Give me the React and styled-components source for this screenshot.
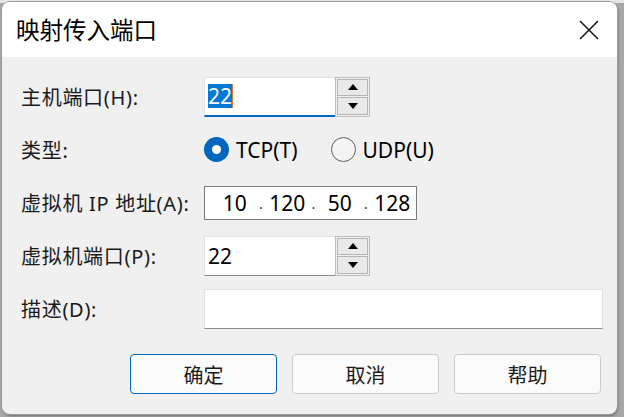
import React from 'react';
import styled, { createGlobalStyle } from 'styled-components';

const GlobalStyle = createGlobalStyle`
  html, body {
    margin: 0;
    padding: 0;
    background: #b4b4b4;
  }
  body {
    font-family: "Noto Sans", "Noto Sans CJK SC", sans-serif;
    color: #000;
  }
`;

const Desktop = styled.div`
  width: 624px;
  height: 417px;
  padding: 2px 0 0 2px;
  box-sizing: border-box;
  background: linear-gradient(#e6e6e6 0, #e6e6e6 3px, #a8a8a8 3px);
  overflow: hidden;
`;

const Window = styled.div`
  width: 615px;
  height: 412px;
  display: flex;
  flex-direction: column;
  background: #f0f0f0;
  border-radius: 8px;
  box-shadow: 0 0 0 1px #9a9a9a, 1px 2px 3px rgba(0, 0, 0, 0.35);
  overflow: hidden;
`;

const TitleBar = styled.div`
  height: 55px;
  display: flex;
  align-items: center;
  justify-content: space-between;
  padding: 0 18px 0 14px;
  background: #fff;
`;

const Title = styled.h1`
  margin: 0;
  font-size: 23.5px;
  font-weight: 400;
  font-family: "Noto Sans CJK SC", sans-serif;
  line-height: 1;
`;

const CloseButton = styled.button`
  width: 20px;
  height: 20px;
  padding: 0;
  border: 0;
  background: none;
  display: flex;
`;

const Body = styled.div`
  flex: 1;
  display: flex;
  flex-direction: column;
  padding: 13px 16px 20px 19px;
`;

const Form = styled.div`
  display: grid;
  grid-template-columns: 183px 1fr;
  grid-auto-rows: 53px;
  align-items: center;
`;

const Label = styled.label`
  font-size: 20px;
  letter-spacing: 0.7px;
  color: #1a1a1a;
  white-space: nowrap;
`;

const Field = styled.div`
  display: flex;
  align-items: center;
`;

const SpinBox = styled.div`
  display: flex;
  width: 166px;
  height: 40px;
`;

const SpinInput = styled.div`
  flex: 1;
  display: flex;
  align-items: center;
  padding-left: 3px;
  background: #fff;
  border: 1px solid #e2e2e2;
  border-right: 0;
  border-bottom: ${p => (p.$focused ? '2px solid #0067c0' : '1px solid #8a8a8a')};
  font-size: 21px;
`;

const Selected = styled.span`
  background: #0078d7;
  color: #fff;
  line-height: 24px;
  border-right: 1.5px solid #e87a1a;
`;

const SpinButtons = styled.div`
  width: 35px;
  display: flex;
  flex-direction: column;
  gap: 1px;
  padding: 1px;
  box-sizing: border-box;
  border: 1px solid #bcbcbc;
  background: #f0f0f0;
`;

const SpinButton = styled.div`
  flex: 1;
  display: flex;
  align-items: center;
  justify-content: center;
  border: 1px solid #b4b4b4;
  background: #e9e9e9;
`;

const Arrow = styled.span`
  width: 0;
  height: 0;
  border-left: 5px solid transparent;
  border-right: 5px solid transparent;
  ${p => (p.$down ? 'border-top: 6px solid #000;' : 'border-bottom: 6px solid #000;')}
`;

const RadioGroup = styled.div`
  display: flex;
  align-items: center;
  gap: 33px;
`;

const Radio = styled.div`
  display: flex;
  align-items: center;
  gap: 7px;
  font-size: 21px;
`;

const RadioMark = styled.span`
  width: 25px;
  height: 25px;
  border-radius: 50%;
  box-sizing: border-box;
  display: flex;
  align-items: center;
  justify-content: center;
  ${p =>
    p.$checked
      ? 'background: #0067c0;'
      : 'background: #f4f4f4; border: 1.5px solid #5c5c5c;'}

  &::after {
    content: '';
    width: 9px;
    height: 9px;
    border-radius: 50%;
    background: #fff;
    display: ${p => (p.$checked ? 'block' : 'none')};
  }
`;

const IpBox = styled.div`
  width: 213px;
  height: 34px;
  box-sizing: border-box;
  display: flex;
  align-items: center;
  padding-left: 8px;
  background: #fff;
  border: 1px solid #7a7a7a;
  font-size: 21px;
`;

const Octet = styled.span`
  width: 43.5px;
  text-align: center;
`;

const Dot = styled.span`
  width: 9px;
  text-align: center;
  font-size: 14px;
  align-self: flex-end;
  padding-bottom: 6px;
  color: #333;
`;

const TextInput = styled.div`
  width: 399px;
  height: 40px;
  box-sizing: border-box;
  background: #fff;
  border: 1px solid #e2e2e2;
  border-bottom: 1px solid #8a8a8a;
`;

const Actions = styled.div`
  margin-top: auto;
  display: flex;
  justify-content: flex-end;
  gap: 15px;
`;

const Button = styled.button`
  width: 147px;
  height: 40px;
  border-radius: 4px;
  background: #fbfbfb;
  border: 1px solid ${p => (p.$primary ? '#0067c0' : '#cccccc')};
  font-family: "Noto Sans CJK SC", sans-serif;
  font-size: 20px;
  color: #1a1a1a;
  padding: 0;
`;

const Spin = ({ value, focused }) => (
  <SpinBox>
    <SpinInput $focused={focused}>
      {focused ? <Selected>{value}</Selected> : value}
    </SpinInput>
    <SpinButtons>
      <SpinButton><Arrow /></SpinButton>
      <SpinButton><Arrow $down /></SpinButton>
    </SpinButtons>
  </SpinBox>
);

const ip = ['10', '120', '50', '128'];

export default function App() {
  return (
    <>
      <GlobalStyle />
      <Desktop>
        <Window>
          <TitleBar>
            <Title>映射传入端口</Title>
            <CloseButton>
              <svg width="20" height="20" viewBox="0 0 20 20">
                <path d="M1 1 L19 19 M19 1 L1 19" stroke="#1a1a1a" strokeWidth="1.6" fill="none" />
              </svg>
            </CloseButton>
          </TitleBar>
          <Body>
            <Form>
              <Label>主机端口(H):</Label>
              <Field><Spin value="22" focused /></Field>

              <Label>类型:</Label>
              <RadioGroup>
                <Radio><RadioMark $checked />TCP(T)</Radio>
                <Radio><RadioMark />UDP(U)</Radio>
              </RadioGroup>

              <Label>虚拟机 IP 地址(A):</Label>
              <Field>
                <IpBox>
                  {ip.map((o, i) => (
                    <React.Fragment key={i}>
                      {i > 0 && <Dot>.</Dot>}
                      <Octet>{o}</Octet>
                    </React.Fragment>
                  ))}
                </IpBox>
              </Field>

              <Label>虚拟机端口(P):</Label>
              <Field><Spin value="22" /></Field>

              <Label>描述(D):</Label>
              <Field><TextInput /></Field>
            </Form>
            <Actions>
              <Button $primary>确定</Button>
              <Button>取消</Button>
              <Button>帮助</Button>
            </Actions>
          </Body>
        </Window>
      </Desktop>
    </>
  );
}
